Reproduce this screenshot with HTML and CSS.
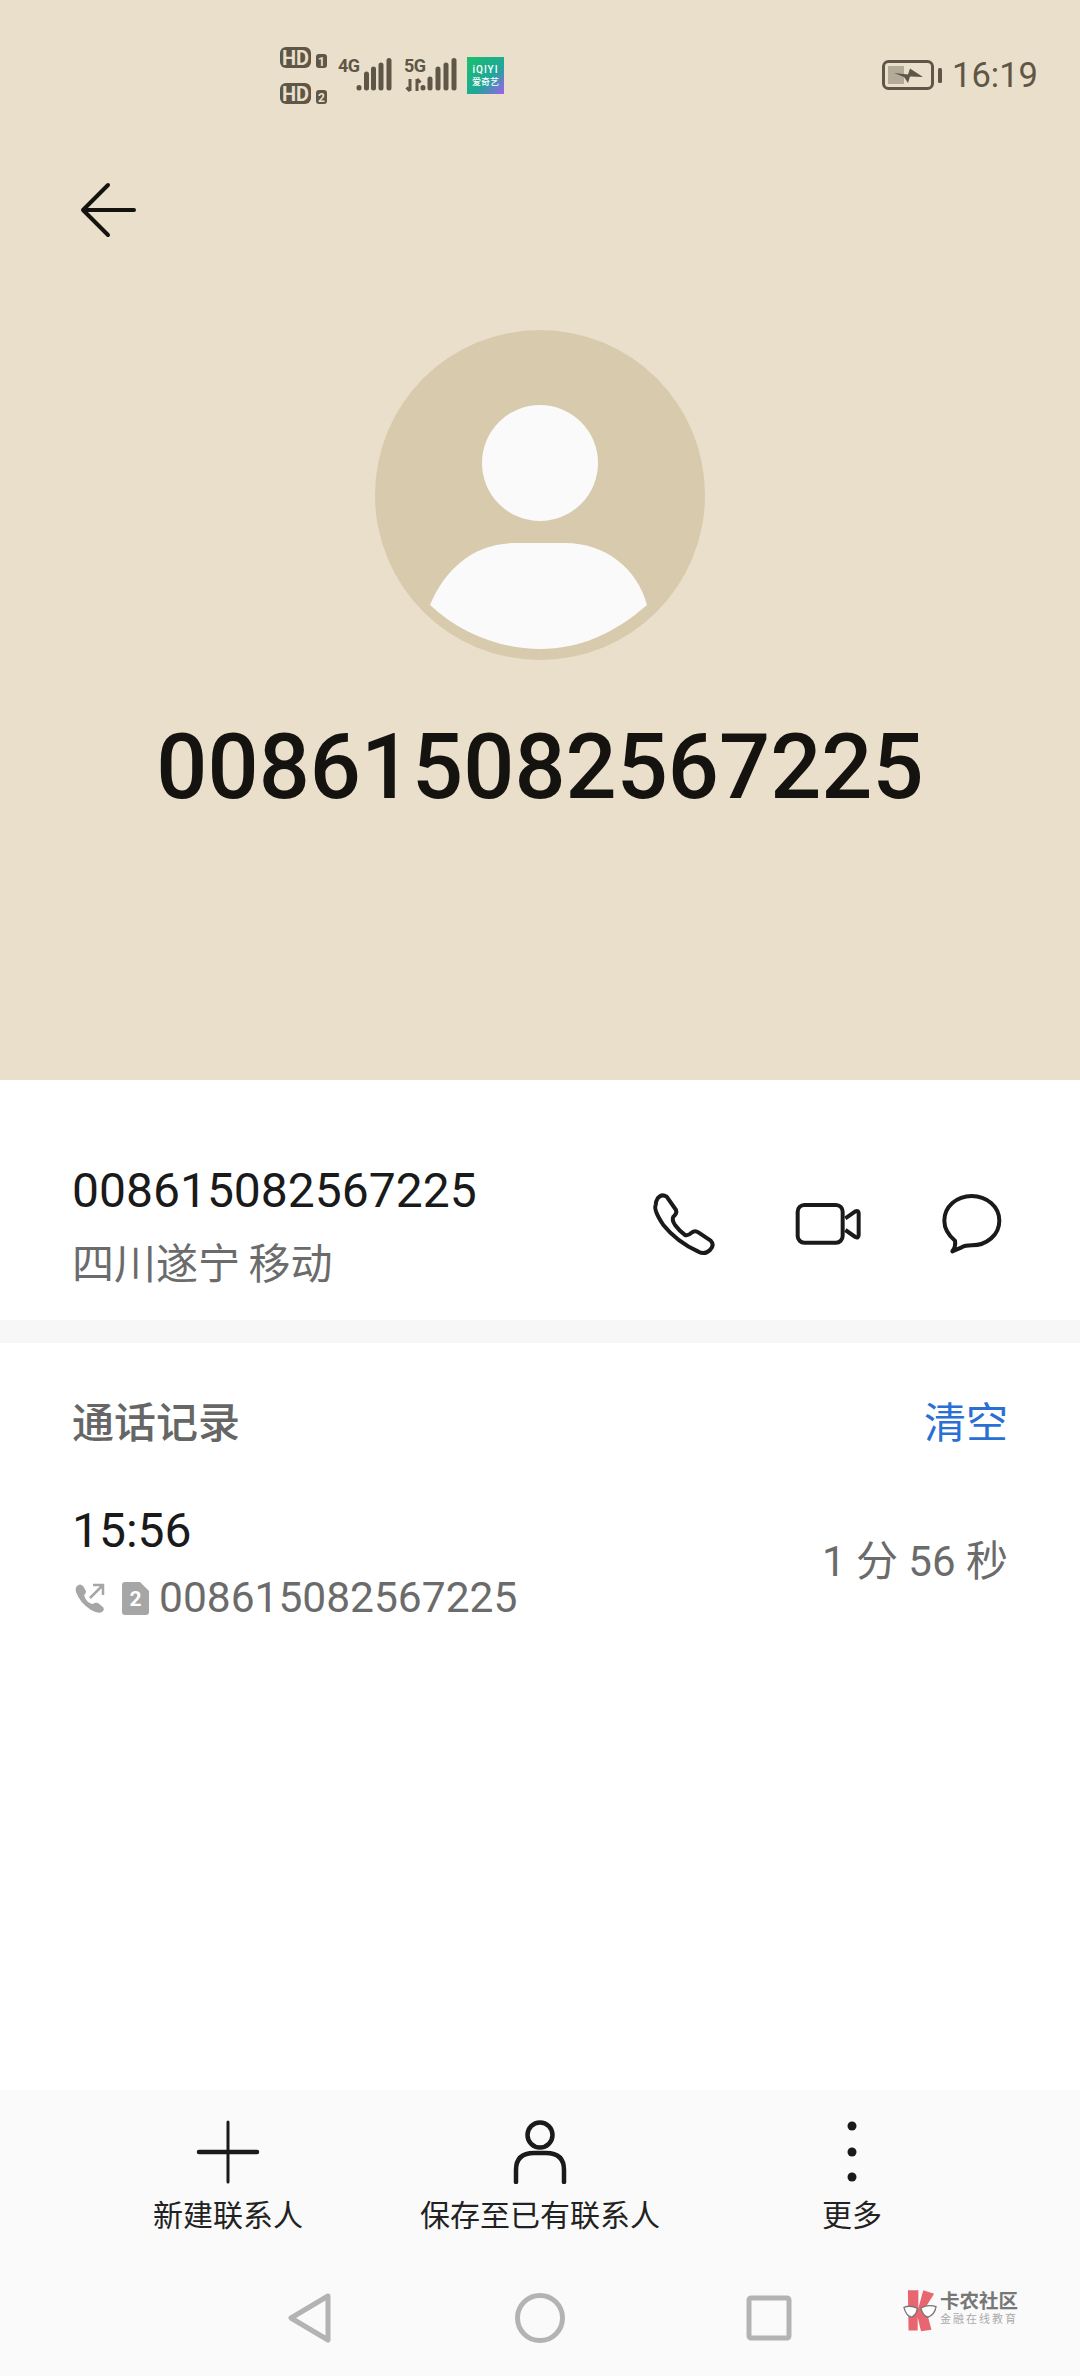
FILE: index.html
```html
<!DOCTYPE html>
<html lang="zh">
<head>
<meta charset="utf-8">
<title>通话详情</title>
<link rel="stylesheet" href="styles.css">
</head>
<body>
<div class="screen">
  <header class="hero">
    <div class="status">
      <svg class="st-hd" viewBox="0 0 48 57">
        <rect class="st-fill" x="0" y="0" width="31" height="21" rx="6"/>
        <text class="st-hdt" x="15.500" y="17.500">HD</text>
        <rect class="st-fill" x="36" y="7" width="11" height="14" rx="3"/>
        <text class="st-num" x="41.500" y="18.500">1</text>
        <rect class="st-fill" x="0" y="36" width="31" height="21" rx="6"/>
        <text class="st-hdt" x="15.500" y="53.500">HD</text>
        <rect class="st-fill" x="36" y="43" width="11" height="14" rx="3"/>
        <text class="st-num" x="41.500" y="54.500">2</text>
      </svg>
      <svg class="st-sig" viewBox="0 -8 56 48">
        <text class="st-net" x="0" y="14">4G</text>
        <g class="st-bars">
          <path d="M21 29.500v0.500M28.500 16v14M35.500 11v19M43 7v23M51 2.500v27.500"/>
        </g>
      </svg>
      <svg class="st-sig" viewBox="0 -8 56 48">
        <text class="st-net" x="0" y="14">5G</text>
        <path class="st-arrows" d="M6 21v12M2.500 29.500L6 33M13 33v-12M13 21l3.500 3.500"/>
        <g class="st-bars">
          <path d="M19 29.500v0.500M26 21v9M34 11v19M42 7v23M50 2.500v27.500"/>
        </g>
      </svg>
      <svg class="st-iq" viewBox="0 0 37 37">
        <defs>
          <linearGradient id="iqg" x1="0" y1="0" x2="1" y2="1">
            <stop offset="0" stop-color="#19c06a"/>
            <stop offset="0.6" stop-color="#20a69a"/>
            <stop offset="1" stop-color="#a45cf0"/>
          </linearGradient>
        </defs>
        <rect width="37" height="37" fill="url(#iqg)"/>
        <text class="iq-a" x="18.500" y="16">iQIYI</text>
        <text class="iq-b" x="18.500" y="28">爱奇艺</text>
      </svg>
      <div class="st-right">
        <svg class="st-batt" viewBox="0 0 60 30">
          <rect class="batt-lvl" x="6" y="6" width="16" height="18"/>
          <rect class="batt-box" x="1.500" y="1.500" width="49" height="27" rx="5"/>
          <path class="batt-bolt" d="M12 13L26 14.500L28 8.500L41 17L28 16.500L26 23L22 17L12 13Z"/>
          <rect class="batt-nub" x="56" y="8" width="4" height="15" rx="1.500"/>
        </svg>
        <span class="st-time">16:19</span>
      </div>
    </div>
    <svg class="back" viewBox="0 0 60 60">
      <path d="M56 30H5M30 5L5 30L30 55"/>
    </svg>
    <svg class="avatar" viewBox="0 0 330 330">
      <circle class="av-bg" cx="165" cy="165" r="165"/>
      <circle class="av-fg" cx="165" cy="133" r="58"/>
      <path class="av-fg" d="M55 275C70 238 100 213 140 213H190C230 213 262 238 272 275C240 303 205 319 165 319C125 319 85 303 55 275Z"/>
    </svg>
    <h1 class="hero-num">008615082567225</h1>
  </header>

  <section class="contact">
    <div class="contact-text">
      <div class="contact-num">008615082567225</div>
      <div class="contact-loc">四川遂宁 移动</div>
    </div>
    <div class="actions">
      <svg class="act" viewBox="90 120 216 216">
        <path d="M113 145Q125 130 140 140L168 180Q172 190 160 200Q155 210 165 225Q180 245 195 255Q205 258 215 248Q225 240 235 247L272 272Q285 285 270 300Q255 315 235 305Q170 275 130 225Q100 180 107 165Q108 152 113 145Z"/>
      </svg>
      <svg class="act" viewBox="516 120 216 216">
        <rect x="533" y="165" width="135" height="113" rx="20"/>
        <path d="M676 205L706 184Q716 180 716 190V255Q716 265 706 261L676 240"/>
      </svg>
      <svg class="act" viewBox="942 120 216 216">
        <path d="M1005 272Q973 245 973 212C973 170 1010 138 1055 138C1100 138 1138 170 1138 212C1138 255 1100 286 1055 286C1045 286 1035 286 1025 292L997 304Q1008 290 1005 272Z"/>
      </svg>
    </div>
  </section>

  <div class="divider"></div>

  <main class="log">
    <div class="log-head">
      <span class="log-title">通话记录</span>
      <span class="log-clear">清空</span>
    </div>
    <div class="log-row">
      <div class="log-left">
        <div class="log-time">15:56</div>
        <div class="log-sub">
          <svg class="ic-out" viewBox="0 0 30 30">
            <path class="ic-phone" d="M2 3Q5 0 8 3L11 8Q11 11 9 12Q10 16 13 19Q16 21 18 21Q20 19 23 20L28 24Q30 27 27 29Q23 31 16 27Q5 20 1 9Q0 5 2 3Z"/>
            <path class="ic-arrow" d="M15 15L27 3M18 2H28V12"/>
          </svg>
          <svg class="ic-sim" viewBox="0 0 27 33">
            <path class="ic-simbg" d="M3 0H18L27 9V30Q27 33 24 33H3Q0 33 0 30V3Q0 0 3 0Z"/>
            <text class="ic-simt" x="13.500" y="24">2</text>
          </svg>
          <span class="log-num">008615082567225</span>
        </div>
      </div>
      <div class="log-dur">1 分 56 秒</div>
    </div>
  </main>

  <nav class="tools">
    <div class="tool">
      <svg class="tool-ic" viewBox="0 0 64 64">
        <path class="line-thin" d="M32 2V62"/>
        <path class="line-bold" d="M3 32H61"/>
      </svg>
      <span class="tool-lbl">新建联系人</span>
    </div>
    <div class="tool">
      <svg class="tool-ic" viewBox="0 0 64 64">
        <circle class="line-bold" cx="32" cy="15" r="12.500"/>
        <path class="line-bold" d="M8 62V50Q8 33 26 33H38Q56 33 56 50V62"/>
      </svg>
      <span class="tool-lbl">保存至已有联系人</span>
    </div>
    <div class="tool">
      <svg class="tool-ic" viewBox="0 0 64 64">
        <circle class="dot" cx="32" cy="6" r="4.500"/>
        <circle class="dot" cx="32" cy="32" r="4.500"/>
        <circle class="dot" cx="32" cy="57" r="4.500"/>
      </svg>
      <span class="tool-lbl">更多</span>
    </div>
  </nav>

  <footer class="navbar">
    <svg class="nav-ic" viewBox="0 0 60 60">
      <path d="M47 8L10 30L47 52Z" class="nav-back"/>
    </svg>
    <svg class="nav-ic" viewBox="0 0 60 60">
      <circle cx="30" cy="30" r="22.500"/>
    </svg>
    <svg class="nav-ic" viewBox="0 0 60 60">
      <rect x="10" y="10" width="40" height="40" rx="2"/>
    </svg>
    <div class="mark">
      <svg class="mark-k" viewBox="60 20 110 140">
        <path class="k-red" d="M78 30H110V85L125 30L158 40L132 82L150 150L118 155L108 112V153H80Z"/>
        <path class="k-glass" d="M66 82Q85 74 106 84Q108 100 90 112Q72 108 66 82ZM118 84Q140 72 164 80Q160 104 140 112Q122 106 118 84Z"/>
      </svg>
      <div class="mark-text">
        <span class="mark-a">卡农社区</span>
        <span class="mark-b">金融在线教育</span>
      </div>
    </div>
  </footer>
</div>
</body>
</html>
```
FILE: styles.css
```css
* { box-sizing: border-box; }
html, body { margin: 0; padding: 0; }
body {
  width: 1080px;
  height: 2376px;
  overflow: hidden;
  background: #fff;
  font-family: Roboto, "Noto Sans CJK SC", sans-serif;
}
.screen {
  display: flex;
  flex-direction: column;
  width: 1080px;
  height: 2376px;
}

/* hero */
.hero {
  display: flex;
  flex-direction: column;
  height: 1080px;
  background: #e9dfca;
}
.status {
  display: flex;
  align-items: flex-start;
  height: 57px;
  margin-top: 47px;
  padding: 0 42px 0 280px;
}
.st-hd { width: 48px; height: 57px; flex: none; }
.st-sig { width: 56px; height: 48px; margin: 3px 0 0 10px; flex: none; }
.st-iq { width: 37px; height: 37px; margin: 10px 0 0 7px; flex: none; }
.st-fill { fill: #5f5647; }
.st-hdt {
  font: 700 20px Roboto, sans-serif;
  fill: #e9dfca;
  text-anchor: middle;
}
.st-num {
  font: 700 12px Roboto, sans-serif;
  fill: #e9dfca;
  text-anchor: middle;
}
.st-net {
  font: 700 18px Roboto, sans-serif;
  fill: #5f5647;
  letter-spacing: -0.5px;
}
.st-bars path {
  fill: none;
  stroke: #5f5647;
  stroke-width: 5;
  stroke-linecap: round;
}
.st-arrows { fill: none; stroke: #5f5647; stroke-width: 3; }
.iq-a {
  font: 500 10px Roboto, sans-serif;
  letter-spacing: 1px;
  fill: #fff;
  text-anchor: middle;
}
.iq-b {
  font: 500 9px "Noto Sans CJK SC", sans-serif;
  fill: #fff;
  text-anchor: middle;
}
.st-right {
  display: flex;
  align-items: center;
  gap: 10px;
  margin-left: auto;
  height: 30px;
  margin-top: 13px;
}
.st-batt { width: 60px; height: 30px; flex: none; }
.batt-lvl { fill: #b3aa98; }
.batt-box { fill: none; stroke: #5f5647; stroke-width: 3; }
.batt-bolt { fill: #5f5647; }
.batt-nub { fill: #5f5647; }
.st-time {
  font-size: 34.500px;
  line-height: 40px;
  color: #5f5647;
}
.back {
  display: block;
  width: 60px;
  height: 60px;
  margin: 76px 0 0 78px;
  flex: none;
}
.back path {
  fill: none;
  stroke: #15130f;
  stroke-width: 4;
  stroke-linecap: round;
  stroke-linejoin: round;
}
.avatar {
  display: block;
  width: 330px;
  height: 330px;
  margin: 90px auto 0;
  flex: none;
}
.av-bg { fill: #d7caad; }
.av-fg { fill: #fafafa; }
.hero-num {
  margin: 55px 0 0;
  font-size: 90px;
  line-height: 106px;
  font-weight: 500;
  text-align: center;
  color: #151310;
}

/* contact row */
.contact {
  display: flex;
  align-items: flex-start;
  height: 240px;
  padding: 81px 74px 0 72px;
  background: #fff;
}
.contact-text { flex: 1; }
.contact-num {
  font-size: 48px;
  line-height: 60px;
  color: #1a1a1a;
}
.contact-loc {
  margin-top: 16px;
  font-size: 42px;
  line-height: 56px;
  word-spacing: -2px;
  color: #6b6b6b;
}
.actions {
  display: flex;
  gap: 70px;
  margin-top: 29px;
}
.act { width: 72px; height: 72px; flex: none; }
.act path, .act rect {
  fill: none;
  stroke: #1a1a1a;
  stroke-width: 12;
  stroke-linejoin: round;
}
.divider { height: 23px; background: #f7f7f7; flex: none; }

/* log */
.log {
  flex: 1;
  padding: 53px 72px 0;
  background: #fff;
}
.log-head {
  display: flex;
  justify-content: space-between;
  align-items: center;
  height: 56px;
}
.log-title {
  font-size: 42px;
  line-height: 56px;
  font-weight: 500;
  color: #666;
}
.log-clear {
  font-size: 42px;
  line-height: 56px;
  color: #2a6fd6;
}
.log-row {
  display: flex;
  justify-content: space-between;
  align-items: center;
  margin-top: 49px;
}
.log-time {
  font-size: 48px;
  line-height: 60px;
  color: #1a1a1a;
}
.log-sub {
  display: flex;
  align-items: center;
  margin-top: 12px;
  height: 50px;
}
.ic-out { width: 30px; height: 30px; margin-left: 3px; flex: none; }
.ic-phone { fill: #a6a6a6; }
.ic-arrow { fill: none; stroke: #a6a6a6; stroke-width: 2.500; }
.ic-sim { width: 27px; height: 33px; margin-left: 17px; flex: none; }
.ic-simbg { fill: #a6a6a6; }
.ic-simt {
  font: 700 21px Roboto, sans-serif;
  fill: #fff;
  text-anchor: middle;
}
.log-num {
  margin-left: 10px;
  font-size: 42.500px;
  line-height: 50px;
  color: #6b6b6b;
}
.log-dur {
  font-size: 42px;
  line-height: 56px;
  color: #6b6b6b;
}

/* toolbar */
.tools {
  display: grid;
  grid-template-columns: repeat(3, 312px);
  height: 150px;
  padding: 30px 72px 0;
  background: #fafafa;
  flex: none;
}
.tool {
  display: flex;
  flex-direction: column;
  align-items: center;
}
.tool-ic { width: 64px; height: 64px; flex: none; }
.line-thin { fill: none; stroke: #1a1a1a; stroke-width: 3; stroke-linecap: round; }
.line-bold { fill: none; stroke: #1a1a1a; stroke-width: 4.500; stroke-linecap: round; }
.dot { fill: #1a1a1a; }
.tool-lbl {
  margin-top: 12px;
  font-size: 30px;
  line-height: 40px;
  color: #222;
}

/* nav bar */
.navbar {
  position: relative;
  display: grid;
  grid-template-columns: repeat(3, 229px);
  justify-content: center;
  justify-items: center;
  align-items: center;
  height: 136px;
  padding-top: 20px;
  background: #fafafa;
  flex: none;
}
.nav-ic { width: 60px; height: 60px; }
.nav-ic path, .nav-ic circle, .nav-ic rect {
  fill: none;
  stroke: #b3b3b3;
  stroke-width: 5;
  stroke-linejoin: round;
}
.mark {
  position: absolute;
  left: 902px;
  top: 47px;
  display: flex;
  align-items: flex-start;
  gap: 2px;
}
.mark-k { width: 36px; height: 46px; flex: none; }
.mark-k .k-red { fill: #e8666f; stroke: none; }
.mark-k .k-glass { fill: #fff; stroke: #777; stroke-width: 4; }
.mark-text { display: flex; flex-direction: column; padding-top: 2px; }
.mark-a {
  font: 700 19.500px/22px "Noto Sans CJK SC", sans-serif;
  color: #777;
}
.mark-b {
  font: 400 11px/14px "Noto Sans CJK SC", sans-serif;
  letter-spacing: 2px;
  color: #aaa;
}
```
